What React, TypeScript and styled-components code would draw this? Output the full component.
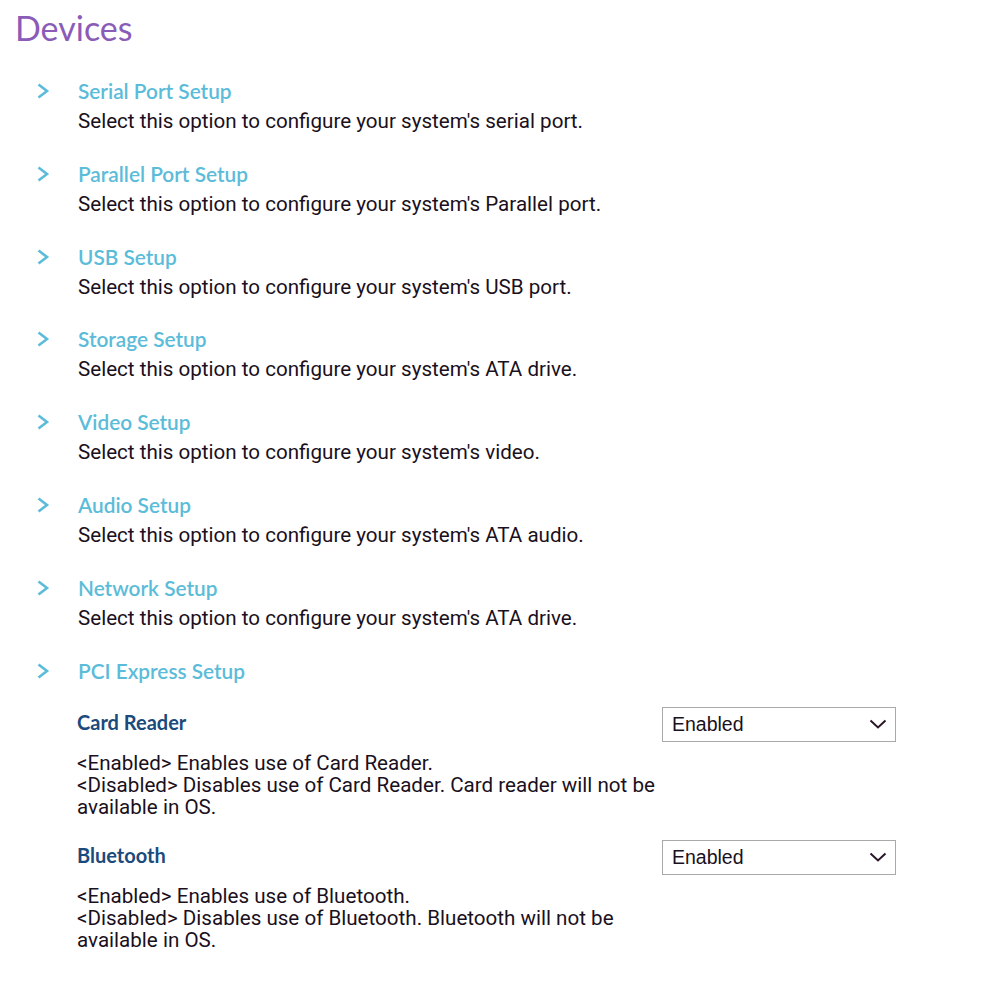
import styled, { createGlobalStyle } from "styled-components";

const GlobalStyle = createGlobalStyle`
  body {
    margin: 0;
    background: #ffffff;
    font-family: Roboto, "Noto Sans", sans-serif;
  }
`;

const Page = styled.div`
  padding: 8px 0 40px 15px;
  width: 988px;
  box-sizing: border-box;
`;

const Title = styled.h1`
  margin: 0 0 29px 0;
  font-family: Lato, "Noto Sans", sans-serif;
  font-size: 34px;
  font-weight: 400;
  line-height: 40px;
  color: #8a5cb8;
`;

const MenuList = styled.div`
  display: flex;
  flex-direction: column;
  gap: 22.8px;
  padding-left: 21px;
`;

const MenuItem = styled.div`
  display: grid;
  grid-template-columns: 42px 1fr;
  align-items: start;
`;

const Chevron = styled.svg`
  margin-top: 5px;
  width: 14px;
  height: 18px;
`;

const ItemTitle = styled.div`
  font-family: Lato, "Noto Sans", sans-serif;
  font-size: 20.8px;
  font-weight: 600;
  line-height: 28px;
  color: #5bbcd9;
`;

const ItemDesc = styled.div`
  font-size: 20.6px;
  line-height: 32px;
  color: #1a1020;
`;

const Settings = styled.div`
  display: flex;
  flex-direction: column;
  gap: 18px;
  margin: 18px 0 0 62px;
  width: 819px;
`;

const Setting = styled.div`
  display: flex;
  flex-direction: column;
`;

const SettingHead = styled.div`
  display: flex;
  justify-content: space-between;
  align-items: center;
  margin-bottom: 10px;
`;

const SettingName = styled.div`
  font-family: Lato, "Noto Sans", sans-serif;
  font-size: 20px;
  font-weight: 700;
  color: #1b4a7c;
`;

const SelectBox = styled.div`
  width: 234px;
  height: 35px;
  margin-top: 4px;
  box-sizing: border-box;
  border: 1px solid #a9a9a9;
  display: flex;
  align-items: center;
  justify-content: space-between;
  padding: 0 8px 0 9px;
  font-family: "Liberation Sans", Arial, sans-serif;
  font-size: 19.5px;
  color: #1a1020;
`;

const SettingDesc = styled.div`
  font-size: 20.6px;
  line-height: 22px;
  color: #1a1020;
  max-width: 582px;
`;

const items = [
  ["Serial Port Setup", "Select this option to configure your system's serial port."],
  ["Parallel Port Setup", "Select this option to configure your system's Parallel port."],
  ["USB Setup", "Select this option to configure your system's USB port."],
  ["Storage Setup", "Select this option to configure your system's ATA drive."],
  ["Video Setup", "Select this option to configure your system's video."],
  ["Audio Setup", "Select this option to configure your system's ATA audio."],
  ["Network Setup", "Select this option to configure your system's ATA drive."],
  ["PCI Express Setup", ""],
];

const settings = ["Card Reader", "Bluetooth"];

const ArrowRight = () => (
  <Chevron viewBox="0 0 14 18">
    <path d="M2.5 2.5 L11 9 L2.5 15.5" fill="none" stroke="#5bbcd9" strokeWidth="2.6" />
  </Chevron>
);

const ArrowDown = () => (
  <svg width="18" height="12" viewBox="0 0 18 12">
    <path d="M1.5 2.5 L9 9.5 L16.5 2.5" fill="none" stroke="#2a1628" strokeWidth="2" />
  </svg>
);

export default function App() {
  return (
    <Page>
      <GlobalStyle />
      <Title>Devices</Title>
      <MenuList>
        {items.map(([title, desc]) => (
          <MenuItem key={title}>
            <ArrowRight />
            <div>
              <ItemTitle>{title}</ItemTitle>
              {desc && <ItemDesc>{desc}</ItemDesc>}
            </div>
          </MenuItem>
        ))}
      </MenuList>
      <Settings>
        {settings.map((name) => (
          <Setting key={name}>
            <SettingHead>
              <SettingName>{name}</SettingName>
              <SelectBox>
                Enabled
                <ArrowDown />
              </SelectBox>
            </SettingHead>
            <SettingDesc>
              &lt;Enabled&gt; Enables use of {name}.
              <br />
              &lt;Disabled&gt; Disables use of {name}. {name === "Card Reader" ? "Card reader" : name} will not be available in OS.
            </SettingDesc>
          </Setting>
        ))}
      </Settings>
    </Page>
  );
}
